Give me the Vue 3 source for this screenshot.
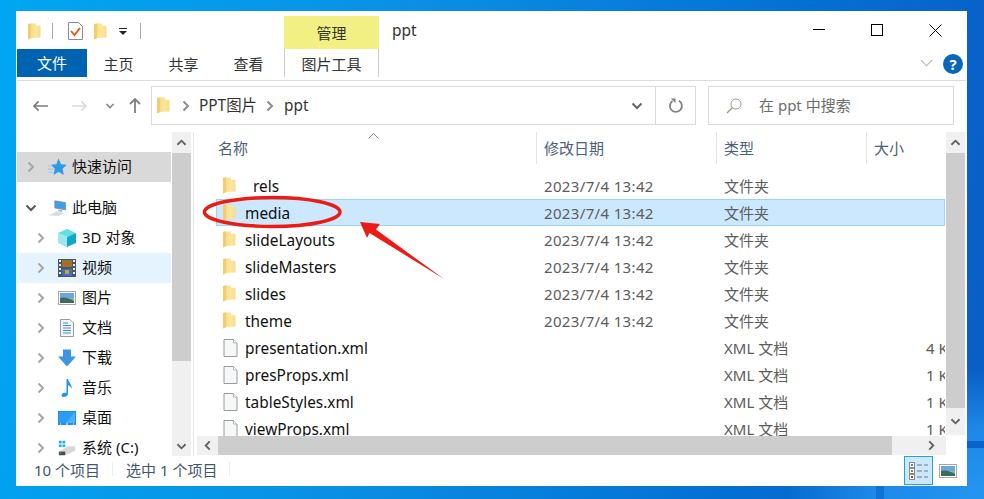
<script setup>
const tree = [
  { label: '此电脑', icon: 'pc', level: 0, open: true },
  { label: '3D 对象', icon: 'cube', level: 1 },
  { label: '视频', icon: 'film', level: 1, hover: true },
  { label: '图片', icon: 'pic', level: 1 },
  { label: '文档', icon: 'docs', level: 1 },
  { label: '下载', icon: 'down', level: 1 },
  { label: '音乐', icon: 'note', level: 1 },
  { label: '桌面', icon: 'desk', level: 1 },
  { label: '系统 (C:)', icon: 'drive', level: 1 }
]
const folderDate = '2023/7/4 13:42'
const files = [
  { name: 'rels', icon: 'folder', date: folderDate, type: '文件夹', size: '', indent: true },
  { name: 'media', icon: 'folder', date: folderDate, type: '文件夹', size: '', selected: true },
  { name: 'slideLayouts', icon: 'folder', date: folderDate, type: '文件夹', size: '' },
  { name: 'slideMasters', icon: 'folder', date: folderDate, type: '文件夹', size: '' },
  { name: 'slides', icon: 'folder', date: folderDate, type: '文件夹', size: '' },
  { name: 'theme', icon: 'folder', date: folderDate, type: '文件夹', size: '' },
  { name: 'presentation.xml', icon: 'file', date: '', type: 'XML 文档', size: '4 KB' },
  { name: 'presProps.xml', icon: 'file', date: '', type: 'XML 文档', size: '1 KB' },
  { name: 'tableStyles.xml', icon: 'file', date: '', type: 'XML 文档', size: '1 KB' },
  { name: 'viewProps.xml', icon: 'file', date: '', type: 'XML 文档', size: '1 KB' }
]
</script>

<template>
  <div class="desktop">
    <svg class="defs" width="0" height="0" aria-hidden="true">
      <defs>
        <linearGradient id="fg" x1="0" y1="0" x2="1" y2="0">
          <stop offset="0" stop-color="#f6d77c" />
          <stop offset="0.6" stop-color="#fbe6a0" />
          <stop offset="1" stop-color="#f9dc88" />
        </linearGradient>
        <symbol id="folder" viewBox="0 0 13 17">
          <path d="M0 1 3 .5 8 .5V2.500L12.500 3V14.500L3.500 15 0 16.500Z" fill="url(#fg)" />
          <path d="M0 1 3 .5V15L0 16.500Z" fill="#f3cd6c" />
        </symbol>
        <symbol id="chev" viewBox="0 0 10 12">
          <path d="M2.500 1.500 7 6 2.500 10.500" fill="none" stroke="currentColor" stroke-width="2" />
        </symbol>
        <symbol id="chevd" viewBox="0 0 12 10">
          <path d="M1.500 2.500 6 7 10.500 2.500" fill="none" stroke="currentColor" stroke-width="2" />
        </symbol>
        <symbol id="chevu" viewBox="0 0 12 10">
          <path d="M1.500 7.500 6 3 10.500 7.500" fill="none" stroke="currentColor" stroke-width="2" />
        </symbol>
        <symbol id="chevl" viewBox="0 0 10 12">
          <path d="M7.500 1.500 3 6 7.500 10.500" fill="none" stroke="currentColor" stroke-width="2" />
        </symbol>
        <symbol id="file" viewBox="0 0 15 18">
          <path d="M1 .5H10.500L14 4V17.500H1Z" fill="#f6f7f8" stroke="#9a9a9a" />
          <path d="M10.500 .5V4H14" fill="#fff" stroke="#b5b5b5" />
        </symbol>
        <symbol id="pc" viewBox="0 0 20 20">
          <path d="M7 2 19 4V12L7 10Z" fill="#3aa0e8" stroke="#7a8b9c" stroke-width=".8" />
          <path d="M11 11.500 15 12.500V14.500L11 13.500Z" fill="#a8b4bf" />
          <path d="M0 18 9 14 18 15.500 11 19Z" fill="#d9dcdf" />
        </symbol>
        <symbol id="star" viewBox="0 0 18 17">
          <path d="M10 .5 12.400 5.800 17.800 6.400 13.800 10.200 15 16 10 13 5.300 16 6.400 10.200 3 6.400 7.800 5.800Z" fill="#2b9be8" />
          <path d="M0 7.500H4M0 10.500H5M.5 13.500H5" stroke="#9fc8e8" stroke-width="1" />
        </symbol>
        <symbol id="cube" viewBox="0 0 18 18">
          <path d="M9 0 18 4 9 8 0 4Z" fill="#5fe0e6" />
          <path d="M0 4 9 8V18L0 14Z" fill="#9be9ec" />
          <path d="M18 4 9 8V18L18 14Z" fill="#10a8c4" />
        </symbol>
        <symbol id="film" viewBox="0 0 18 18">
          <rect width="18" height="18" fill="#4d5560" />
          <path d="M1 1H3V3H1ZM1 5H3V7H1ZM1 9H3V11H1ZM1 13H3V15H1ZM15 1H17V3H15ZM15 5H17V7H15ZM15 9H17V11H15ZM15 13H17V15H15Z" fill="#e8edf2" />
          <rect x="4" y="1" width="10" height="7" fill="#8a7a2a" />
          <rect x="4" y="10" width="10" height="7" fill="#3f6fc0" />
          <rect x="7" y="3" width="4" height="4" fill="#d8503a" />
          <rect x="7" y="11" width="4" height="4" fill="#c9a03a" />
        </symbol>
        <symbol id="pic" viewBox="0 0 18 14">
          <rect x=".5" y=".5" width="17" height="13" fill="#fff" stroke="#a8a8a8" />
          <rect x="2" y="2" width="14" height="5" fill="#6aa8e0" />
          <path d="M2 7H16V12H2Z" fill="#8fb4a8" />
          <path d="M2 7Q8 5 16 10V12H2Z" fill="#3d6a5c" />
        </symbol>
        <symbol id="docs" viewBox="0 0 14 18">
          <path d="M.5.5H10L13.500 4V17.500H.5Z" fill="#f4f6f8" stroke="#9a9a9a" />
          <path d="M3 4H8M3 6.500H11M3 9H11M3 11.500H11M3 14H11" stroke="#3d8fc4" />
        </symbol>
        <symbol id="down" viewBox="0 0 18 17">
          <path d="M5 0H13V7H18L9 17 0 7H5Z" fill="#3e95e4" />
        </symbol>
        <symbol id="note" viewBox="0 0 12 18">
          <path d="M5.500 0H7C7.500 4 11.500 5 10.500 10 10 7.500 8.500 6.500 7 6V14.500C7 17 4.500 18 2.500 18 .5 18 0 16 1 15 2.300 13.500 4 13.500 5.500 14Z" fill="#1e96ee" />
        </symbol>
        <symbol id="desk" viewBox="0 0 18 14">
          <rect width="18" height="14" fill="#1f8fef" />
          <rect x="1" y="1" width="16" height="11" fill="#2b9df5" />
          <path d="M8 12 17 1V12Z" fill="#4db0f8" />
          <path d="M2 13H3M8 13H10M15 13H16" stroke="#fff" />
        </symbol>
        <symbol id="drive" viewBox="0 0 20 16">
          <path d="M1 0H4V3H1ZM5 0H8V3H5ZM1 4H4V7H1ZM5 4H8V7H5Z" fill="#12b0f0" />
          <path d="M1 12 11 6H19V11L8 16H1Z" fill="#d6d8da" />
          <path d="M1 12H8V16H1Z" fill="#4a4a4a" />
          <rect x="2" y="13" width="2" height="1" fill="#38c060" />
        </symbol>
      </defs>
    </svg>

    <div class="window">
      <header class="titlebar">
        <div class="qat">
          <svg class="ic-folder-lg"><use href="#folder" /></svg>
          <i class="qat-sep"></i>
          <svg class="ic-check" viewBox="0 0 15 18">
            <path d="M.5.5H10.500L14.500 4.500V17.500H.5Z" fill="#fff" stroke="#8c8c8c" />
            <path d="M3 9 6.500 13 12 6" fill="none" stroke="#e8501e" stroke-width="1.800" />
          </svg>
          <svg class="ic-folder-lg folder-2"><use href="#folder" /></svg>
          <svg class="ic-drop" viewBox="0 0 8 7"><path d="M0 0H8V1H0ZM0 3H8L4 7Z" fill="#222" /></svg>
          <i class="qat-sep sep-2"></i>
        </div>
        <div class="ctx-head">管理</div>
        <div class="title">ppt</div>
        <div class="winctl">
          <svg width="13" height="13" viewBox="0 0 13 13"><path d="M0 5.500H12" stroke="#000" /></svg>
          <svg width="13" height="13" viewBox="0 0 13 13"><rect x=".5" y=".5" width="11" height="11" fill="none" stroke="#000" /></svg>
          <svg width="13" height="13" viewBox="0 0 13 13"><path d="M.5.5 12.500 12.500M12.500.5.5 12.500" stroke="#000" /></svg>
        </div>
      </header>

      <nav class="ribbon">
        <div class="tab-file">文件</div>
        <div class="tab first">主页</div>
        <div class="tab">共享</div>
        <div class="tab">查看</div>
        <div class="tab-ctx">图片工具</div>
        <div class="ribbon-end">
          <svg class="rib-chev" viewBox="0 0 14 8"><path d="M1 1 7 7 13 1" fill="none" stroke="#b4b4b4" stroke-width="1.200" /></svg>
          <div class="help">?</div>
        </div>
      </nav>

      <div class="addressrow">
        <div class="navbtns">
          <svg class="nav-a" viewBox="0 0 16 12"><path d="M1 6H16M6 1 1 6 6 11" fill="none" stroke="#7f7f7f" stroke-width="1.800" /></svg>
          <svg class="nav-a nav-f" viewBox="0 0 16 12"><path d="M0 6H15M10 1 15 6 10 11" fill="none" stroke="#d9d9d9" stroke-width="1.800" /></svg>
          <svg class="nav-c"><use href="#chevd" /></svg>
          <svg class="nav-u" viewBox="0 0 12 15"><path d="M6 15V1M1 6 6 1 11 6" fill="none" stroke="#7f7f7f" stroke-width="1.800" /></svg>
        </div>
        <div class="address">
          <svg class="ic-folder-lg addr-folder"><use href="#folder" /></svg>
          <svg class="crumb-chev c1"><use href="#chev" /></svg>
          <span class="crumb c-a">PPT图片</span>
          <svg class="crumb-chev c2"><use href="#chev" /></svg>
          <span class="crumb c-b">ppt</span>
          <svg class="addr-drop"><use href="#chevd" /></svg>
          <div class="refresh">
            <svg width="16" height="16" viewBox="0 0 16 16">
              <path d="M11 2.800A6 6 0 1 1 4.500 3" fill="none" stroke="#7f7f7f" stroke-width="1.800" />
              <path d="M2.800 .5H7.500V5Z" fill="#7f7f7f" />
            </svg>
          </div>
        </div>
        <div class="search">
          <svg width="16" height="16" viewBox="0 0 16 16">
            <circle cx="10" cy="6" r="5" fill="none" stroke="#9a9a9a" />
            <path d="M6.500 9.500 1 15" stroke="#b08a70" stroke-width="1.200" />
          </svg>
          <span>在 ppt 中搜索</span>
        </div>
      </div>

      <div class="body">
        <aside class="sidebar">
          <div class="tree">
            <div class="tree-row quick">
              <svg class="tw"><use href="#chev" /></svg>
              <svg class="tree-ic"><use href="#star" /></svg>
              <span>快速访问</span>
            </div>
            <div class="tree-gap"></div>
            <div
              v-for="n in tree"
              :key="n.label"
              class="tree-row"
              :class="{ child: n.level === 1, hover: n.hover }"
            >
              <svg class="tw" :class="{ open: n.open }"><use :href="n.open ? '#chevd' : '#chev'" /></svg>
              <svg class="tree-ic"><use :href="'#' + n.icon" /></svg>
              <span>{{ n.label }}</span>
            </div>
          </div>
          <div class="vscroll side-scroll">
            <div class="sb-btn"><svg class="sb-a"><use href="#chevu" /></svg></div>
            <div class="sb-thumb side-thumb"></div>
            <div class="sb-fill"></div>
            <div class="sb-btn"><svg class="sb-a"><use href="#chevd" /></svg></div>
          </div>
        </aside>

        <main class="pane">
          <div class="pane-top">
            <div class="list">
              <div class="cols">
                <svg class="sort" viewBox="0 0 11 6"><path d="M.5 5.500 5.500.5 10.500 5.500" fill="none" stroke="#8a8a8a" /></svg>
                <div class="col col-name">名称</div>
                <div class="col col-date">修改日期</div>
                <div class="col col-type">类型</div>
                <div class="col col-size">大小</div>
              </div>
              <div class="rows">
                <div v-for="f in files" :key="f.name" class="row" :class="{ selected: f.selected }">
                  <div class="cell-name">
                    <svg class="row-ic" :class="f.icon"><use :href="'#' + f.icon" /></svg>
                    <span :class="{ indent: f.indent }">{{ f.name }}</span>
                  </div>
                  <div class="cell-date">{{ f.date }}</div>
                  <div class="cell-type">{{ f.type }}</div>
                  <div class="cell-size">{{ f.size }}</div>
                </div>
              </div>
            </div>
            <div class="vscroll main-scroll">
              <div class="sb-btn"><svg class="sb-a"><use href="#chevu" /></svg></div>
              <div class="sb-thumb main-thumb"></div>
              <div class="sb-btn last"><svg class="sb-a"><use href="#chevd" /></svg></div>
            </div>
          </div>
          <div class="hscroll">
            <div class="hb-btn"><svg class="hb-a"><use href="#chevl" /></svg></div>
            <div class="hb-thumb"></div>
            <div class="hb-fill"><svg class="hb-a"><use href="#chev" /></svg></div>
          </div>
        </main>
      </div>

      <footer class="status">
        <span class="st-a">10 个项目</span>
        <i class="st-sep"></i>
        <span class="st-b">选中 1 个项目</span>
        <i class="st-sep sep-b"></i>
        <div class="views">
          <div class="view active">
            <svg width="20" height="18" viewBox="0 0 20 18">
              <rect x=".5" y=".5" width="5" height="5" fill="#fff" stroke="#8c8c8c" />
              <rect x=".5" y="6.500" width="5" height="5" fill="#fff" stroke="#8c8c8c" />
              <rect x=".5" y="12.500" width="5" height="5" fill="#fff" stroke="#8c8c8c" />
              <rect x="2" y="2" width="2" height="2" fill="#4a8ac0" />
              <rect x="2" y="8" width="2" height="2" fill="#9a9030" />
              <rect x="2" y="14" width="2" height="2" fill="#b04020" />
              <path d="M8 3H13M15 3H19M8 9H13M15 9H19M8 15H13M15 15H19" stroke="#777" />
            </svg>
          </div>
          <div class="view">
            <svg width="18" height="14"><use href="#pic" /></svg>
          </div>
        </div>
      </footer>
    </div>

    <svg class="annot" width="984" height="499" viewBox="0 0 984 499">
      <ellipse cx="272.200" cy="212" rx="67.800" ry="14.500" fill="none" stroke="#ec1c14" stroke-width="3.500" />
      <path d="M360 222 380 224 376 229.500 444 279 369.500 233 367 238Z" fill="#ec1c14" />
    </svg>
  </div>
</template>

<style>
html, body { margin: 0; padding: 0; overflow: hidden; }
</style>

<style scoped>
.desktop {
  position: relative;
  width: 984px;
  height: 499px;
  box-sizing: border-box;
  padding: 11px 17px 13px 16px;
  overflow: hidden;
  background:
    linear-gradient(#0b62cc, #0b62cc) 967px 441px / 17px 7px no-repeat,
    linear-gradient(#0f72d8, #0f72d8) 876px 486px / 8px 13px no-repeat,
    radial-gradient(ellipse 200px 130px at 100% 100%, #2496f2 0%, rgba(36, 150, 242, .75) 55%, rgba(36, 150, 242, 0) 100%),
    linear-gradient(100deg, #00a6f2 0%, #0a8fe4 40%, #0470d4 75%, #0a5cc4 100%);
  font-family: "Noto Sans", "Noto Sans CJK SC", sans-serif;
  font-size: 15px;
  color: #1a1a1a;
}
.defs { position: absolute; }
.window {
  width: 951px;
  height: 475px;
  background: #fff;
  display: flex;
  flex-direction: column;
}
svg { display: block; flex: none; }

.titlebar { height: 38px; display: flex; flex: none; }
.qat { width: 268px; display: flex; align-items: center; padding: 9px 0 0 12px; box-sizing: border-box; height: 31px; }
.ic-folder-lg { width: 13px; height: 17px; }
.qat-sep { width: 1px; height: 16px; background: #aaa; margin-left: 11px; }
.ic-check { width: 15px; height: 18px; margin-left: 15px; }
.folder-2 { margin-left: 11px; }
.ic-drop { width: 8px; height: 7px; margin-left: 12px; }
.sep-2 { margin-left: 13px; }
.ctx-head {
  width: 95px;
  margin-top: 5px;
  height: 33px;
  background: #f2f082;
  text-align: center;
  line-height: 35px;
  color: #333;
}
.title { margin-left: 13px; line-height: 38px; font-size: 15.500px; color: #333; }
.winctl { margin-left: auto; display: flex; gap: 45px; padding: 13px 25px 0 0; }
.winctl svg { width: 13px; height: 13px; }

.ribbon { height: 28px; display: flex; flex: none; margin-left: 1px; }
.tab-file { width: 70px; background: #0063b1; color: #fff; text-align: center; line-height: 28px; }
.tab { width: 65px; text-align: center; line-height: 30px; color: #333; }
.tab.first { margin-left: -1px; }
.tab-ctx {
  width: 95px;
  margin-left: 3px;
  box-sizing: border-box;
  border-left: 1px solid #ccc;
  border-right: 1px solid #ccc;
  text-align: center;
  line-height: 30px;
  color: #333;
}
.ribbon-end { margin-left: auto; display: flex; align-items: center; padding-right: 4px; }
.rib-chev { width: 13px; height: 8px; margin-right: 10px; }
.help {
  width: 20px;
  height: 20px;
  margin-top: 2px;
  border-radius: 50%;
  background: #0a66b8;
  color: #fff;
  font-weight: 700;
  font-size: 15px;
  line-height: 20px;
  text-align: center;
}

.addressrow {
  height: 47px;
  margin: 3px 1px 0;
  border-top: 1px solid #dcdcdc;
  box-sizing: border-box;
  display: flex;
  padding-top: 5px;
  flex: none;
}
.navbtns { width: 134px; display: flex; align-items: center; height: 39px; padding-left: 16px; box-sizing: border-box; }
.nav-a { width: 15px; height: 12px; }
.nav-f { margin-left: 24px; }
.nav-c { width: 10px; height: 8px; margin-left: 18px; color: #888; }
.nav-u { width: 12px; height: 15px; margin-left: 14px; }
.address {
  width: 545px;
  height: 39px;
  box-sizing: border-box;
  border: 1px solid #d9d9d9;
  display: flex;
  align-items: center;
  padding-left: 5px;
}
.crumb-chev { width: 10px; height: 12px; color: #8c8c8c; }
.c1 { margin-left: 11px; }
.c2 { margin-left: 8px; }
.crumb { color: #333; font-size: 15.400px; line-height: 37px; }
.c-a { margin-left: 8px; }
.c-b { margin-left: 9px; }
.addr-drop { width: 12px; height: 10px; margin-left: auto; margin-right: 12px; color: #666; }
.refresh {
  width: 40px;
  height: 100%;
  border-left: 1px solid #d9d9d9;
  box-sizing: border-box;
  display: flex;
  align-items: center;
  justify-content: center;
}
.search {
  width: 246px;
  height: 39px;
  margin-left: 12px;
  box-sizing: border-box;
  border: 1px solid #d9d9d9;
  display: flex;
  align-items: center;
  padding-left: 17px;
  color: #6d6d6d;
}
.search span { margin-left: 17px; padding-bottom: 2px; }

.body { height: 326px; display: flex; flex: none; margin-top: 5px; margin-left: 1px; }
.sidebar { width: 174px; display: flex; flex: none; height: 324px; border-right: 1px solid #e6e6e6; padding-right: 2px; }
.tree { width: 155px; padding-top: 20px; box-sizing: border-box; overflow: hidden; flex: none; }
.tree-row { height: 30px; display: flex; align-items: center; padding-left: 9px; color: #111; box-sizing: border-box; width: 154px; }
.tree-row.quick { background: #d9d9d9; }
.tree-gap { height: 11px; }
.tree-row.hover { background: #e5f3ff; }
.tw { width: 10px; height: 12px; color: #a6a6a6; }
.tw.open { color: #595959; width: 12px; height: 10px; margin-left: -1px; margin-right: -1px; }
.tree-ic { width: 19px; height: 18px; margin-left: 12px; }
.tree-row span { margin-left: 5px; padding-bottom: 4px; }
.tree-row.child { padding-left: 19px; }
.child .tree-ic { margin-left: 12px; width: 18px; }
.child span { margin-left: 6px; }

.vscroll { width: 19px; display: flex; flex-direction: column; flex: none; }
.side-scroll { background: #f0f0f0; }
.sb-btn { height: 21px; background: #f0f0f0; display: flex; align-items: center; justify-content: center; flex: none; }
.sb-a { width: 11px; height: 9px; color: #606060; }
.sb-thumb { background: #cdcdcd; flex: none; }
.side-thumb { height: 208px; }
.sb-fill { flex: 1; }
.side-scroll .sb-btn:last-child { height: 19px; }

.pane { flex: 1; min-width: 0; display: flex; flex-direction: column; padding-left: 3px; }
.pane-top { height: 304px; display: flex; flex: none; }
.list { width: 748px; flex: none; overflow: hidden; }
.cols { position: relative; height: 32px; display: flex; color: #4c607a; }
.sort { position: absolute; left: 171px; top: 1px; width: 11px; height: 6px; }
.col { box-sizing: border-box; padding-left: 8px; line-height: 32px; position: relative; }
.col-name { width: 339px; padding-left: 21px; }
.col-date { width: 180px; }
.col-type { width: 150px; }
.col-size { width: 79px; }
.col-date::before, .col-type::before, .col-size::before {
  content: "";
  position: absolute;
  left: 0;
  top: 0;
  width: 1px;
  height: 32px;
  background: #e5e5e5;
}
.rows { padding-top: 8px; padding-left: 19px; }
.row { height: 27px; display: flex; align-items: center; width: 729px; box-sizing: border-box; border: 1px solid transparent; white-space: nowrap; }
.row.selected { background: #cce8ff; border-color: #99d1ff; }
.cell-name { width: 327px; display: flex; align-items: center; flex: none; color: #111; font-size: 15.400px; }
.row-ic { margin-left: 6px; }
.row-ic.folder { width: 13px; height: 17px; }
.row-ic.file { width: 15px; height: 18px; }
.cell-name span { margin-left: 9px; padding-top: 2px; }
.cell-name span.indent { margin-left: 17px; }
.row-ic.file + span { margin-left: 7px; }
.cell-date { width: 180px; flex: none; color: #5c5c5c; letter-spacing: .35px; }
.cell-type { width: 150px; flex: none; color: #5c5c5c; }
.cell-size { width: 71px; flex: none; color: #5c5c5c; padding-left: 52px; box-sizing: border-box; overflow: hidden; }
.main-scroll { margin-left: 1px; }
.main-thumb { height: 255px; }
.sb-btn.last { height: 27px; }

.hscroll { height: 19px; width: 749px; display: flex; flex: none; }
.hb-btn { width: 21px; background: #f0f0f0; display: flex; align-items: center; justify-content: center; color: #606060; }
.hb-thumb { width: 674px; background: #cdcdcd; }
.hb-fill { flex: 1; background: #f0f0f0; display: flex; align-items: center; justify-content: flex-end; padding-right: 10px; color: #606060; }
.hb-a { width: 9px; height: 11px; }

.status { flex: 1; display: flex; align-items: center; font-size: 15px; color: #44566e; padding: 0 0 6px 18px; box-sizing: border-box; min-height: 0; }
.st-sep { width: 1px; height: 14px; background: #ececec; margin-left: 12px; }
.st-b { margin-left: 13px; }
.sep-b { margin-left: 12px; }
.views { margin-left: auto; display: flex; align-self: flex-start; margin-top: -2px; margin-right: 5px; position: relative; }
.view { width: 29px; height: 29px; box-sizing: border-box; display: flex; align-items: center; justify-content: center; }
.view.active { background: #cce8ff; border: 1px solid #26a0da; }
.annot { position: absolute; left: 0; top: 0; pointer-events: none; }
</style>
